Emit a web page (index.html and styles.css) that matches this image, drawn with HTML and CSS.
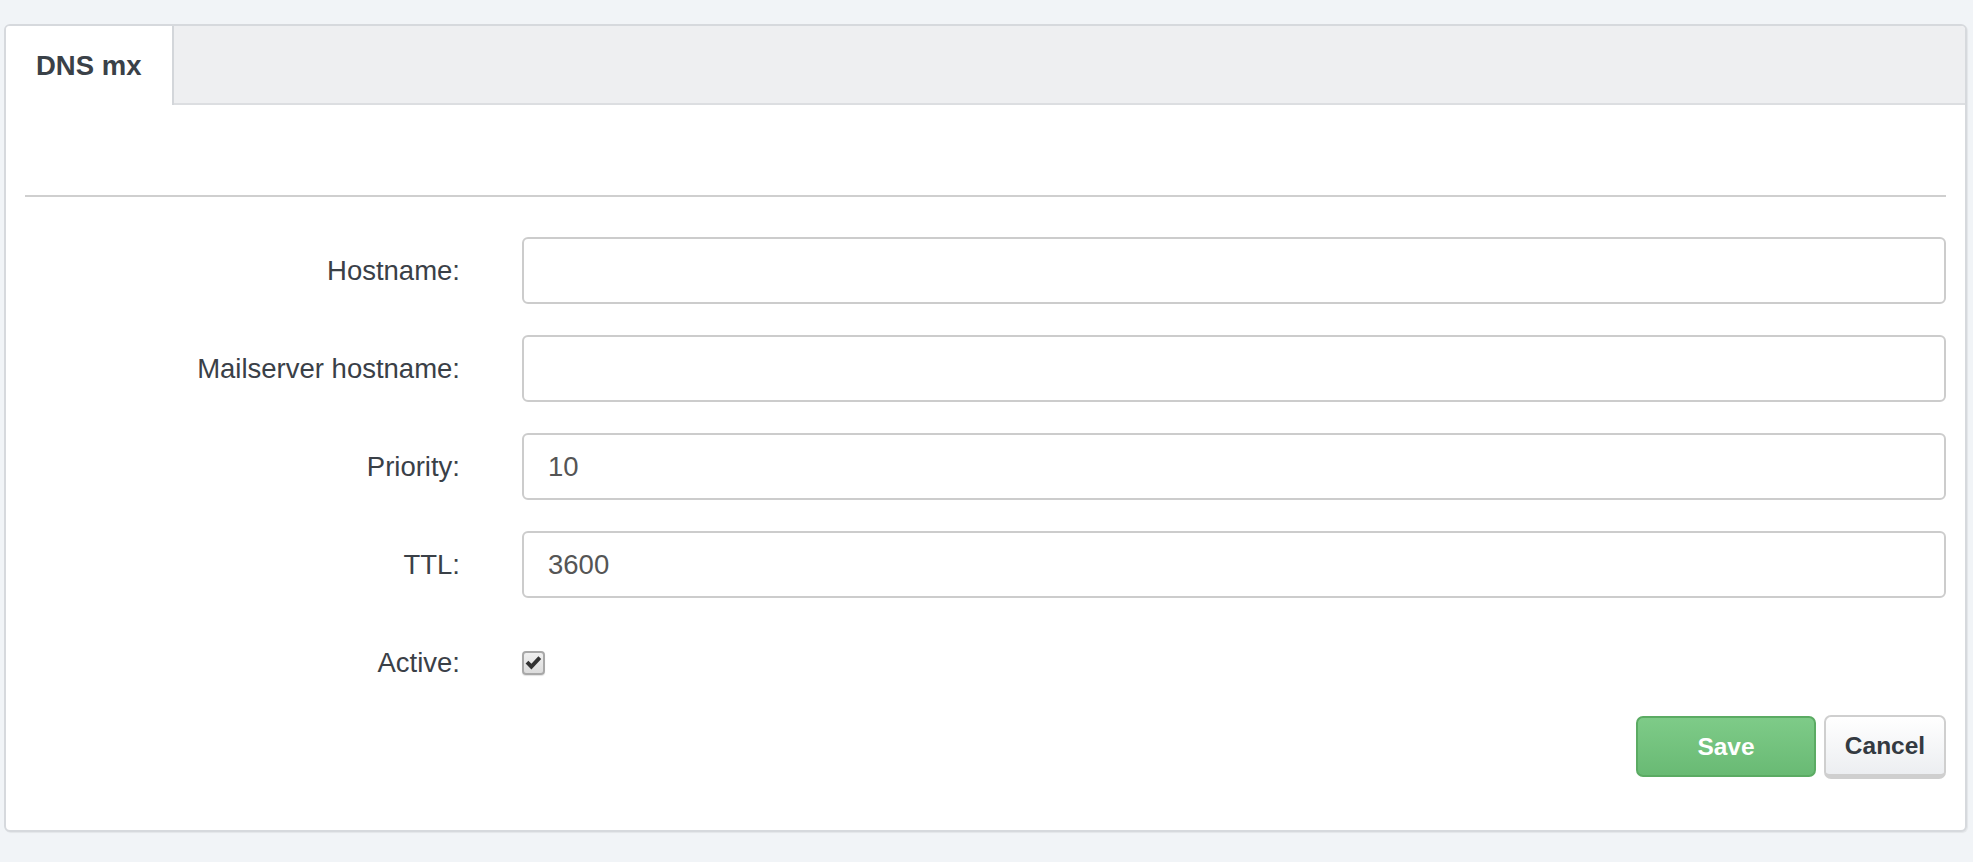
FILE: index.html
```html
<!DOCTYPE html>
<html lang="en">
<head>
<meta charset="utf-8">
<title>DNS mx</title>
<link rel="stylesheet" href="styles.css">
</head>
<body>
<div class="panel">
  <div class="tabs">
    <div class="tab">DNS mx</div>
  </div>
  <div class="content">
    <hr class="sep">
    <form class="form">
      <div class="row">
        <label class="lbl">Hostname:</label>
        <input class="field" type="text" value="">
      </div>
      <div class="row">
        <label class="lbl">Mailserver hostname:</label>
        <input class="field" type="text" value="">
      </div>
      <div class="row">
        <label class="lbl">Priority:</label>
        <input class="field" type="text" value="10">
      </div>
      <div class="row">
        <label class="lbl">TTL:</label>
        <input class="field" type="text" value="3600">
      </div>
      <div class="row">
        <label class="lbl">Active:</label>
        <span class="check">
          <svg width="17" height="16" viewBox="0 0 17 16"><path d="M0.6 8.6 L3.4 5.8 L6.4 8.8 L13.4 1.2 L16.2 4 L6.4 14.6 Z" fill="#333"/></svg>
        </span>
      </div>
      <div class="actions">
        <button type="button" class="btn save">Save</button>
        <button type="button" class="btn cancel">Cancel</button>
      </div>
    </form>
  </div>
</div>
</body>
</html>
```
FILE: styles.css
```css
html, body {
  margin: 0;
  padding: 0;
}
body {
  background: #f1f4f7;
  padding: 24px 6px 32px 4px;
  font-family: "Liberation Sans", Arial, sans-serif;
  color: #3a4047;
}
.panel {
  background: #fff;
  border: 2px solid #d6d9dd;
  border-radius: 6px;
  box-shadow: 1px 1px 1px rgba(0,0,0,0.06);
  overflow: hidden;
}
.tabs {
  display: flex;
  height: 77px;
  background: #eeeff1;
  border-bottom: 2px solid #dcdee1;
}
.tab {
  display: flex;
  align-items: center;
  padding: 0 31px 0 30px;
  background: #fff;
  border-right: 2px solid #d3d6da;
  margin-bottom: -2px;
  font-weight: bold;
  font-size: 27.5px;
  color: #3a4148;
}
.content {
  padding: 90px 19px 51px 19px;
}
.sep {
  margin: 0;
  border: 0;
  height: 2px;
  background: #cfcfcf;
}
.form {
  margin-top: 40px;
  display: flex;
  flex-direction: column;
  gap: 31px;
}
.row {
  display: grid;
  grid-template-columns: 435px 1fr;
  column-gap: 62px;
  align-items: center;
  height: 67px;
}
.lbl {
  text-align: right;
  font-size: 27.5px;
  color: #3a4047;
}
.field {
  box-sizing: border-box;
  height: 67px;
  width: 100%;
  border: 2px solid #cccccc;
  border-radius: 6px;
  padding: 0 24px;
  font-family: "Liberation Sans", Arial, sans-serif;
  font-size: 27.5px;
  color: #555;
  background: #fff;
  outline: none;
}
.check {
  box-sizing: border-box;
  width: 23px;
  height: 24px;
  border: 2px solid #a8a8a8;
  border-radius: 4px;
  background: linear-gradient(#f0f0f0, #dcdcdc);
  display: flex;
  align-items: center;
  justify-content: center;
  box-shadow: 0 1px 1px rgba(0,0,0,0.12);
}
.check svg {
  display: block;
}
.actions {
  display: flex;
  justify-content: flex-end;
  align-items: flex-start;
  gap: 8px;
  margin-top: -12px;
}
.btn {
  box-sizing: border-box;
  font-family: "Liberation Sans", Arial, sans-serif;
  font-weight: bold;
  font-size: 24.5px;
  border-radius: 7px;
  cursor: pointer;
  padding: 0;
}
.save {
  width: 180px;
  height: 61px;
  margin-top: 1px;
  color: #fff;
  background: linear-gradient(#7ecb88, #69ba74);
  border: 2px solid #5bab63;
}
.cancel {
  width: 122px;
  height: 64px;
  color: #343a41;
  background: linear-gradient(#ffffff, #eceef1);
  border: 2px solid #cfcfcf;
  border-bottom-width: 5px;
}
```
